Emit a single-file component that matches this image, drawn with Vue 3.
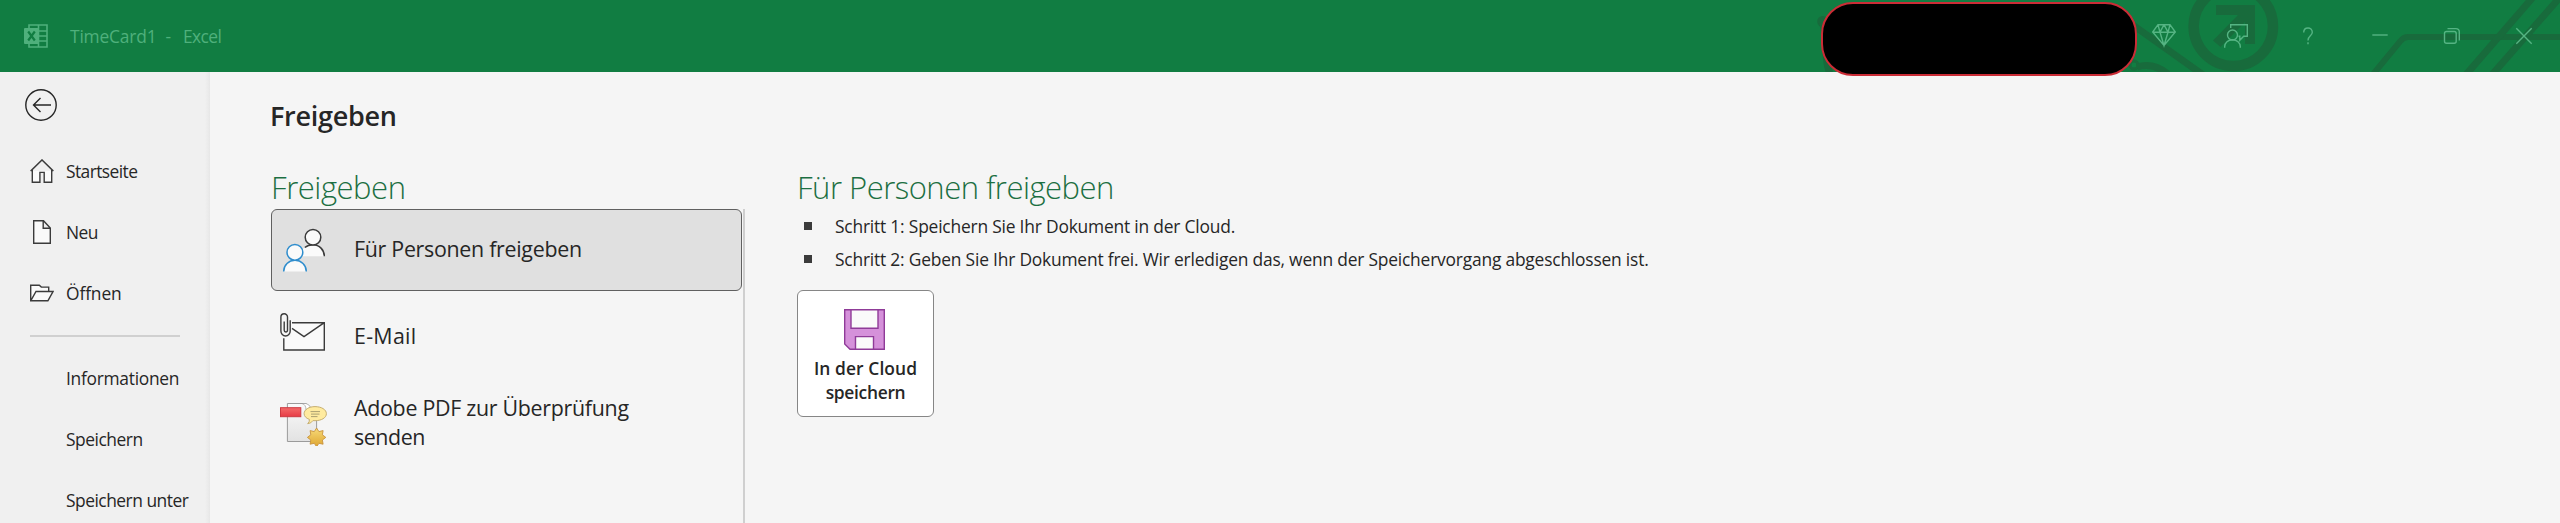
<script setup>
const mainNav = [
  { label: 'Startseite', icon: 'home', track: -0.58 },
  { label: 'Neu', icon: 'file', track: -0.55 },
  { label: 'Öffnen', icon: 'folder', track: -0.12 }
]
const docNav = [
  { label: 'Informationen', track: -0.28 },
  { label: 'Speichern', track: -0.46 },
  { label: 'Speichern unter', track: -0.5 }
]
const tracking = (value) => ({ letterSpacing: value + 'px' })
</script>

<template>
  <div class="window">
    <header class="titlebar">
      <svg class="pattern" width="760" height="72" viewBox="1800 0 760 72" fill="none">
        <circle cx="1822.7" cy="21.500" r="5.500" fill="#186b3c" />
        <g stroke="#186b3c">
          <path d="M1822 22C1830 40 1822 58 1831 76" stroke-width="7" />
          <path d="M2130 23L2206 77" stroke-width="7" />
          <circle cx="2134" cy="65" r="4" stroke-width="3" />
          <path d="M2137 67Q2153 62 2168 74" stroke-width="7" />
          <circle cx="2233.300" cy="26.300" r="39.700" stroke-width="10.500" />
          <path d="M2370 78L2400.500 41Q2403.500 37 2408 37H2560" stroke-width="6" />
          <path d="M2464 77L2534 -4M2490 77L2562 -5" stroke-width="7" />
        </g>
        <path d="M2216 5h39v39h-10V22l-24.500 25-7.500-6.500L2238 15h-22z" fill="#186b3c" />
      </svg>

      <svg class="logo" width="24" height="24" viewBox="0 0 24 24">
        <path d="M5 1h18v22H5zM5 7h18M5 12h18M5 17h18M14.500 1v22" fill="none" stroke="#4fb07c" stroke-width="1.600" />
        <rect x="0" y="4" width="15" height="16" rx="1" fill="#4fb07c" />
        <path d="M4.200 7.500l6.600 9M10.800 7.500l-6.600 9" stroke="#117d42" stroke-width="2.200" />
      </svg>
      <div class="caption"><span class="doc">TimeCard1</span><span class="dash">-</span><span class="app">Excel</span></div>

      <div class="redacted"></div>
      <div class="controls">
        <button class="control" aria-label="Premium">
          <svg width="24" height="24" viewBox="0 0 24 24"><path d="M6 .700h12L23.300 8 12 21.500.700 8zM.700 8.200h22.600M6 .700L8 8.200l4 13.300 4-13.300L18 .700M8 8.200L12 .700l4 7.500" /></svg>
        </button>
        <button class="control" aria-label="Feedback">
          <svg width="24" height="24" viewBox="0 0 24 24"><circle cx="8.500" cy="11" r="5" /><path d="M.700 23.700v-1.200a7.800 6.800 0 0 1 15.600 0v1.200M6.700 4V.700h16.600v11.600h-3.600l-3.900 4v-4h-1.300" /></svg>
        </button>
        <button class="control" aria-label="Hilfe">
          <svg width="24" height="24" viewBox="0 0 24 24"><path d="M7.700 8.500C7.700 2.500 16.300 2.500 16.300 8.300C16.300 12 12 11.800 12 16.500M12 18.300v2" /></svg>
        </button>
        <button class="control" aria-label="Minimieren">
          <svg width="24" height="24" viewBox="0 0 24 24"><path d="M4.300 11h15.400" /></svg>
        </button>
        <button class="control" aria-label="Verkleinern">
          <svg width="24" height="24" viewBox="0 0 24 24"><rect x="4.500" y="7.500" width="11.700" height="11.700" rx="2" /><path d="M7.500 4.600h8.300q3.500 0 3.500 3.500v8.300" /></svg>
        </button>
        <button class="control" aria-label="Schließen">
          <svg width="24" height="24" viewBox="0 0 24 24"><path d="M4.300 4.300l15.400 15.400M19.700 4.300L4.300 19.700" /></svg>
        </button>
      </div>
    </header>

    <div class="body">
      <nav class="sidebar">
        <svg class="back" width="32" height="32" viewBox="0 0 32 32" fill="none" stroke="#262626" stroke-width="1.400">
          <circle cx="16" cy="16" r="15.200" /><path d="M26 16H8.500M15.500 9L8.500 16l7 7" />
        </svg>

        <a v-for="item in mainNav" :key="item.label" class="entry">
          <svg width="24" height="24" viewBox="0 0 24 24" fill="#fafafa" stroke="#3b3b3b" stroke-width="1.400">
            <path v-if="item.icon === 'home'" d="M.600 12L12 .900 23.400 12M2.300 10.500v12.800h7.600V13.400h4.300v9.900h7.500V10.500L12 1z" />
            <path v-else-if="item.icon === 'file'" d="M3.700.700h9.800l6.800 7.400v15.200H3.700zM13.200.700v7.600h7.100" />
            <path v-else d="M.700 20V4.200h8.600l2 1.900h7.400v4.400M.700 19.800L6 10.500h17L17.900 19.800z" />
          </svg>
          <span :style="tracking(item.track)">{{ item.label }}</span>
        </a>

        <div class="rule"></div>

        <a v-for="item in docNav" :key="item.label" class="entry plain">
          <span :style="tracking(item.track)">{{ item.label }}</span>
        </a>
      </nav>

      <main class="page">
        <h1>Freigeben</h1>
        <div class="columns">
          <section class="targets">
            <h2 class="narrow">Freigeben</h2>
            <div class="list">
              <div class="target selected">
                <svg width="48" height="48" viewBox="0 0 48 48" fill="#fafafa" stroke-width="1.500">
                  <g stroke="#3b3b3b">
                    <path d="M22 30.200V24Q26 18.700 33 18.700A11.400 11.400 0 0 1 44.300 30.200" stroke="none" />
                    <path d="M24.800 21.500Q28 18.700 33 18.700A11.400 11.400 0 0 1 44.300 30.200" fill="none" />
                    <circle cx="33" cy="11.300" r="7.800" />
                  </g>
                  <g stroke="#2f8dcd">
                    <path d="M3.700 45.400a11.300 11.100 0 0 1 22.600 0" />
                    <circle cx="14.900" cy="26.300" r="7.900" />
                  </g>
                </svg>
                <span class="t-people">Für Personen freigeben</span>
              </div>
              <div class="target">
                <svg width="48" height="48" viewBox="0 0 48 48" fill="none" stroke="#3b3b3b" stroke-width="1.400">
                  <path d="M3.800 10.700H44.300V38H3.800z" fill="#fafafa" stroke="none" />
                  <path d="M12 10.700H44.300V38H3.800V26.300M12 16.300L24 24.600 44.300 10.700" />
                  <path d="M-.800 3h12v22h-12z" fill="#f5f5f5" stroke="none" />
                  <path d="M10.200 8.300V19a4.600 5 0 0 1-9.300 0V5a3.300 3.300 0 0 1 6.600 0v13.200a1.600 1.700 0 0 1-3.300 0V9.500" stroke-width="1.400" />
                </svg>
                <span class="t-mail">E-Mail</span>
              </div>
              <div class="target">
                <svg width="48" height="48" viewBox="0 0 48 48">
                  <defs>
                    <linearGradient id="sheet" x2="0" y2="1"><stop stop-color="#fafafa" /><stop offset="1" stop-color="#e2e2e2" /></linearGradient>
                    <linearGradient id="flag" x2="0" y2="1"><stop stop-color="#f36a69" /><stop offset="1" stop-color="#e73b45" /></linearGradient>
                    <linearGradient id="seal" x2="0" y2="1"><stop stop-color="#f7da79" /><stop offset="1" stop-color="#dea52f" /></linearGradient>
                  </defs>
                  <path d="M7.400 5.500H26l10.600 9V43.500H7.400z" fill="url(#sheet)" stroke="#9b9b9b" />
                  <path d="M22 5.500q4 1 4 6.500l5-2q-2-4-5-4.500z" fill="#fff" stroke="#999" stroke-width=".700" />
                  <rect x=".500" y="9.700" width="20.300" height="9" fill="url(#flag)" stroke="#cc3940" />
                  <path d="M35 8.600c6.400 0 11.400 3 11.400 7.100s-5 7-11.400 7q-1.200 0-2-.200-1.800 2.900-5.300 3.200 2-1.800 1.700-4.300c-3.300-1.200-5.300-3.200-5.300-5.700 0-4.100 4.900-7.100 10.900-7.100z" fill="#ffeb9f" stroke="#c6ae70" />
                  <path d="M30.500 13.600h9.500M31 16.100h8.500M31 18.600h6.500" stroke="#a2976c" stroke-width=".900" />
                  <path d="M36.600 30l2.300 3.600 4.200-1-.700 4.200 3.400 2.600-3.400 2.600.7 4.200-4.200-.900-2.300 3.500-2.300-3.500-4.200.900.700-4.200-3.400-2.600 3.400-2.600-.7-4.200 4.200 1z" fill="url(#seal)" stroke="#c8923c" stroke-width=".900" />
                </svg>
                <span class="t-adobe">Adobe PDF zur Überprüfung<br /><i>senden</i></span>
              </div>
            </div>
          </section>

          <section class="details">
            <h2>Für Personen freigeben</h2>
            <ul>
              <li>Schritt 1: Speichern Sie Ihr Dokument in der Cloud.</li>
              <li>Schritt 2: Geben Sie Ihr Dokument frei. Wir erledigen das, wenn der Speichervorgang abgeschlossen ist.</li>
            </ul>
            <button class="cloud">
              <svg width="41" height="41" viewBox="0 0 41 41" stroke="#8f3b98" stroke-width="1.400">
                <path d="M.700.700h39.600v39.600H6L.700 35z" fill="#d591da" />
                <path d="M7 .700h27v18.600H7zM11.500 40.300V27.600h18v12.700z" fill="#fafafa" />
              </svg>
              <span class="c-top">In der Cloud</span>
              <span class="c-bottom">speichern</span>
            </button>
          </section>
        </div>
      </main>
    </div>
  </div>
</template>

<style>
body { margin: 0; overflow: hidden; }
</style>

<style scoped>
.window {
  width: 2560px;
  height: 523px;
  overflow: hidden;
  display: flex;
  flex-direction: column;
  background: #f5f5f5;
  color: #262626;
  font-family: "Open Sans", "Noto Sans", sans-serif;
  font-size: 17.4px;
}
button { font: inherit; color: inherit; padding: 0; border: 0; background: none; }
svg { display: block; flex: none; }

.titlebar {
  position: relative;
  height: 72px;
  flex: none;
  display: flex;
  align-items: center;
  background: #117d42;
  color: #4fb07c;
}
.pattern { position: absolute; right: 0; top: 0; }
.logo { margin-left: 24px; }
.caption { display: flex; margin-left: 22px; line-height: 72px; white-space: nowrap; }
.doc { width: 95.5px; letter-spacing: -.19px; }
.dash { width: 17.5px; }
.app { letter-spacing: -.6px; }
.redacted {
  position: absolute;
  left: 1821px;
  top: 2px;
  width: 316px;
  height: 74px;
  box-sizing: border-box;
  border: 2px solid #cb2c36;
  border-radius: 32px;
  background: #000;
  z-index: 1;
}
.controls { position: relative; display: flex; margin-left: auto; }
.control { width: 72px; height: 72px; display: flex; align-items: center; justify-content: center; }
.control svg { fill: none; stroke: #55b483; stroke-width: 1.4; }

.body { flex: 1; min-height: 0; display: flex; }
.sidebar {
  width: 210px;
  flex: none;
  background: linear-gradient(to right, #f0f0f0 205px, #e9e9e9 209px, #e6e6e6);
}
.back { margin: 17px 0 20px 25px; }
.entry { height: 61px; display: flex; align-items: center; gap: 12px; padding-left: 30px; white-space: nowrap; }
.entry svg { margin-top: -2px; }
.entry span { padding-bottom: 2px; }
.plain { padding-left: 66px; }
.rule { width: 150px; height: 2px; margin: 11px 0 11px 30px; background: #d0d0d0; }

.page { flex: 1; padding-left: 61px; }
h1, h2, ul { margin: 0; padding: 0; }
h1 { margin-top: 25px; font-size: 27px; line-height: 38px; font-weight: 600; letter-spacing: -.28px; text-indent: -1px; }
.columns { display: flex; margin-top: 32px; }
h2 { color: #1c6f42; font-size: 31px; line-height: 40px; font-weight: 330; letter-spacing: -.5px; white-space: nowrap; }
h2.narrow { letter-spacing: -.45px; }
.targets { width: 474px; }
.list { display: flex; flex-direction: column; gap: 4px; height: 320px; margin-top: 2px; border-right: 2px solid #cfcfcf; }
.target {
  width: 471px;
  height: 82px;
  box-sizing: border-box;
  border: 1px solid transparent;
  border-radius: 6px;
  padding-left: 8px;
  display: flex;
  align-items: center;
  gap: 26px;
  font-size: 21.4px;
  line-height: 29px;
}
.selected { background: #e0e0e0; border-color: #606060; }
.t-people, .t-adobe { letter-spacing: -.29px; }
.t-people { padding-bottom: 4px; }
.t-mail { letter-spacing: .3px; padding-bottom: 2px; }
.t-adobe i { font-style: normal; letter-spacing: -.42px; }

.details { margin-left: 52px; }
ul { list-style: none; margin-top: 2px; }
li { display: flex; align-items: center; height: 33px; letter-spacing: -.198px; white-space: nowrap; }
li::before { content: ""; width: 8px; height: 8px; margin: 0 23px 0 7px; background: #3b3b3b; }
.cloud {
  width: 137px;
  height: 127px;
  box-sizing: border-box;
  margin-top: 15px;
  padding-top: 18px;
  border: 1px solid #868686;
  border-radius: 6px;
  background: #fff;
  display: flex;
  flex-direction: column;
  align-items: center;
  font-weight: 600;
  line-height: 24px;
}
.cloud svg { margin: 0 0 6px -2px; }
.c-top { letter-spacing: .09px; }
.c-bottom { letter-spacing: -.3px; }
</style>
